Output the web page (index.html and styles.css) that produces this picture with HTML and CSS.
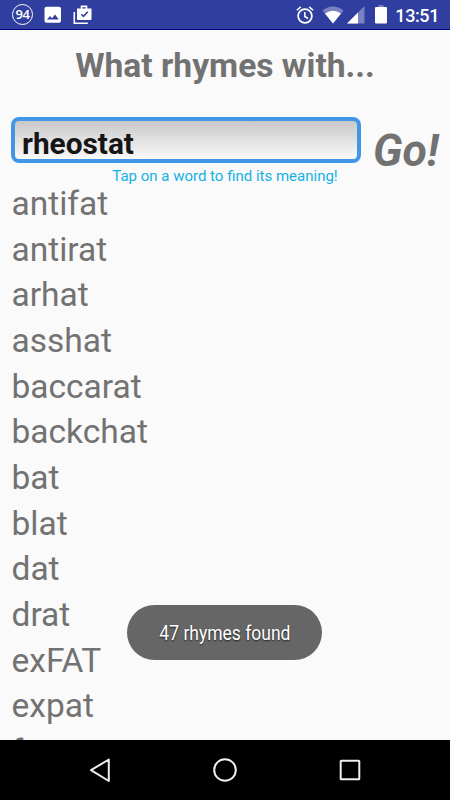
FILE: index.html
```html
<!DOCTYPE html>
<html lang="en">
<head>
    <meta charset="UTF-8">
    <meta name="viewport" content="width=device-width, initial-scale=1.0">
    <title>What rhymes with...</title>
    <link rel="stylesheet" href="styles.css">
</head>
<body>
    <div class="statusbar">
        <div class="notifications">
            <span class="badge">94</span>
            <svg width="18" height="18" viewBox="0 0 18 18">
                <path fill="#fff" fill-rule="evenodd" d="M2.500 .8h12.500a2 2 0 0 1 2 2v12a2 2 0 0 1-2 2H2.500a2 2 0 0 1-2-2v-12a2 2 0 0 1 2-2zM3 13.500h11.800L11 8.500l-3 3.800-2-2.400z"/>
            </svg>
            <svg width="20" height="20" viewBox="0 0 20 20">
                <path fill="none" stroke="#fff" stroke-width="1.600" d="M1.300 7v11.200h13.500M8.500 4V1.400h5V4"/>
                <path fill="#fff" d="M4 3.500h14.500v10.500a1 1 0 0 1-1 1H5a1 1 0 0 1-1-1z"/>
                <path fill="none" stroke="#303f9f" stroke-width="1.600" d="M8.300 9.200l2.200 2.200 4.300-4.600"/>
            </svg>
        </div>
        <div class="system">
            <svg width="18" height="20" viewBox="0 0 18 20">
                <circle cx="9" cy="11" r="6.900" fill="none" stroke="#fff" stroke-width="1.700"/>
                <path fill="none" stroke="#fff" stroke-width="1.500" d="M8.800 7v4.500l3.200 2M.8 5.300l4-3.400M17.200 5.300l-4-3.400"/>
            </svg>
            <svg class="wifi" width="22" height="18" viewBox="0 0 22 18">
                <path fill="#fff" opacity=".35" d="M11 17.500L.5 4.500Q11-3.500 21.500 4.500z"/>
                <path fill="#fff" d="M11 17.500L3 7.500q8-5.600 16 0z"/>
            </svg>
            <svg class="signal" width="18" height="18" viewBox="0 0 18 18">
                <path fill="#fff" opacity=".35" d="M0 17.500h17.500V0z"/>
                <path fill="#fff" d="M0 17.500h11V6.500z"/>
            </svg>
            <svg class="battery" width="12" height="19" viewBox="0 0 12 19">
                <path fill="#fff" opacity=".35" d="M3.500 0h5v2.500h-5z"/>
                <rect y="2" width="12" height="16.500" rx="1" fill="#fff"/>
            </svg>
            <span class="clock">13:51</span>
        </div>
    </div>

    <div class="content">
        <h1>What rhymes with...</h1>
        <div class="search">
            <input type="text" class="word" value="rheostat">
            <span class="go">Go!</span>
        </div>
        <p class="hint">Tap on a word to find its meaning!</p>
        <ul class="rhymes">
            <li>antifat</li>
            <li>antirat</li>
            <li>arhat</li>
            <li>asshat</li>
            <li>baccarat</li>
            <li>backchat</li>
            <li>bat</li>
            <li>blat</li>
            <li>dat</li>
            <li>drat</li>
            <li>exFAT</li>
            <li>expat</li>
            <li>fat</li>
        </ul>
        <div class="toast"><span>47 rhymes found</span></div>
    </div>

    <div class="navbar">
        <svg width="24" height="26" viewBox="0 0 24 26">
            <path fill="none" stroke="#eee" stroke-width="2" stroke-linejoin="round" d="M20.800 2.500v21.500L3 13.200z"/>
        </svg>
        <svg width="26" height="26" viewBox="0 0 26 26">
            <circle cx="13" cy="13" r="10.800" fill="none" stroke="#eee" stroke-width="2"/>
        </svg>
        <svg width="24" height="24" viewBox="0 0 24 24">
            <rect x="2.700" y="2.700" width="18.600" height="18.600" rx=".5" fill="none" stroke="#eee" stroke-width="2"/>
        </svg>
    </div>
</body>
</html>
```

FILE: styles.css
```css
body {
    margin: 0;
    height: 800px;
    display: flex;
    flex-direction: column;
    overflow: hidden;
    font-family: Roboto, sans-serif;
    background-color: #fafafa;
    color: #727272;
}
svg {
    display: block;
}
.statusbar {
    box-sizing: border-box;
    height: 30px;
    flex: none;
    display: flex;
    justify-content: space-between;
    align-items: center;
    padding: 0 11px 0 12px;
    background-color: #303f9f;
    border-bottom: 1px solid #000080;
    color: #fff;
}
.notifications, .system {
    display: flex;
    align-items: center;
}
.notifications {
    gap: 11px;
}
.badge {
    box-sizing: border-box;
    width: 21px;
    height: 21px;
    border: 1.5px solid #fff;
    border-radius: 50%;
    font: 600 13px/19px "Open Sans", sans-serif;
    text-align: center;
    letter-spacing: -0.5px;
}
.wifi {
    margin-left: 8px;
}
.signal {
    margin-left: 3px;
}
.battery {
    margin-left: 10px;
}
.clock {
    margin-left: 8px;
    font-size: 18px;
    font-weight: 500;
    line-height: 30px;
    padding-top: 2px;
    letter-spacing: -0.4px;
}
.content {
    position: relative;
    height: 710px;
    flex: none;
    overflow: hidden;
}
h1 {
    margin: 16px 0 0;
    font-size: 33.6px;
    line-height: 40px;
    text-align: center;
}
.search {
    display: flex;
    margin: 31px 11px 0;
    height: 46px;
}
.word {
    box-sizing: border-box;
    width: 350px;
    height: 46px;
    padding: 6px 7px 0;
    border: 4px solid #4296e8;
    border-radius: 8px;
    background: linear-gradient(#c8c8c8, #fafafa);
    font: bold 29.8px Roboto, sans-serif;
    color: #151515;
    outline: none;
}
.go {
    margin-left: 12px;
    font-size: 44.6px;
    font-weight: bold;
    font-style: italic;
    line-height: 69px;
}
.hint {
    margin: 4px 0 0;
    font-size: 15px;
    line-height: 18px;
    text-align: center;
    color: #14b1e3;
}
.rhymes {
    list-style: none;
    margin: -4px 0 0;
    padding: 0 11.5px;
    font-size: 33.5px;
    line-height: 45.65px;
}
.toast {
    position: absolute;
    left: 127px;
    top: 575px;
    width: 195px;
    height: 55px;
    border-radius: 28px;
    background-color: #666;
    color: #fff;
    font-size: 20px;
    line-height: 57px;
    text-align: center;
    white-space: nowrap;
}
.toast span {
    display: inline-block;
    transform: scaleX(0.875);
    text-shadow: 0 1px 2px rgba(0, 0, 0, 0.7);
}
.navbar {
    height: 60px;
    flex: none;
    display: flex;
    justify-content: center;
    align-items: center;
    gap: 100px;
    background-color: #000;
}
```
